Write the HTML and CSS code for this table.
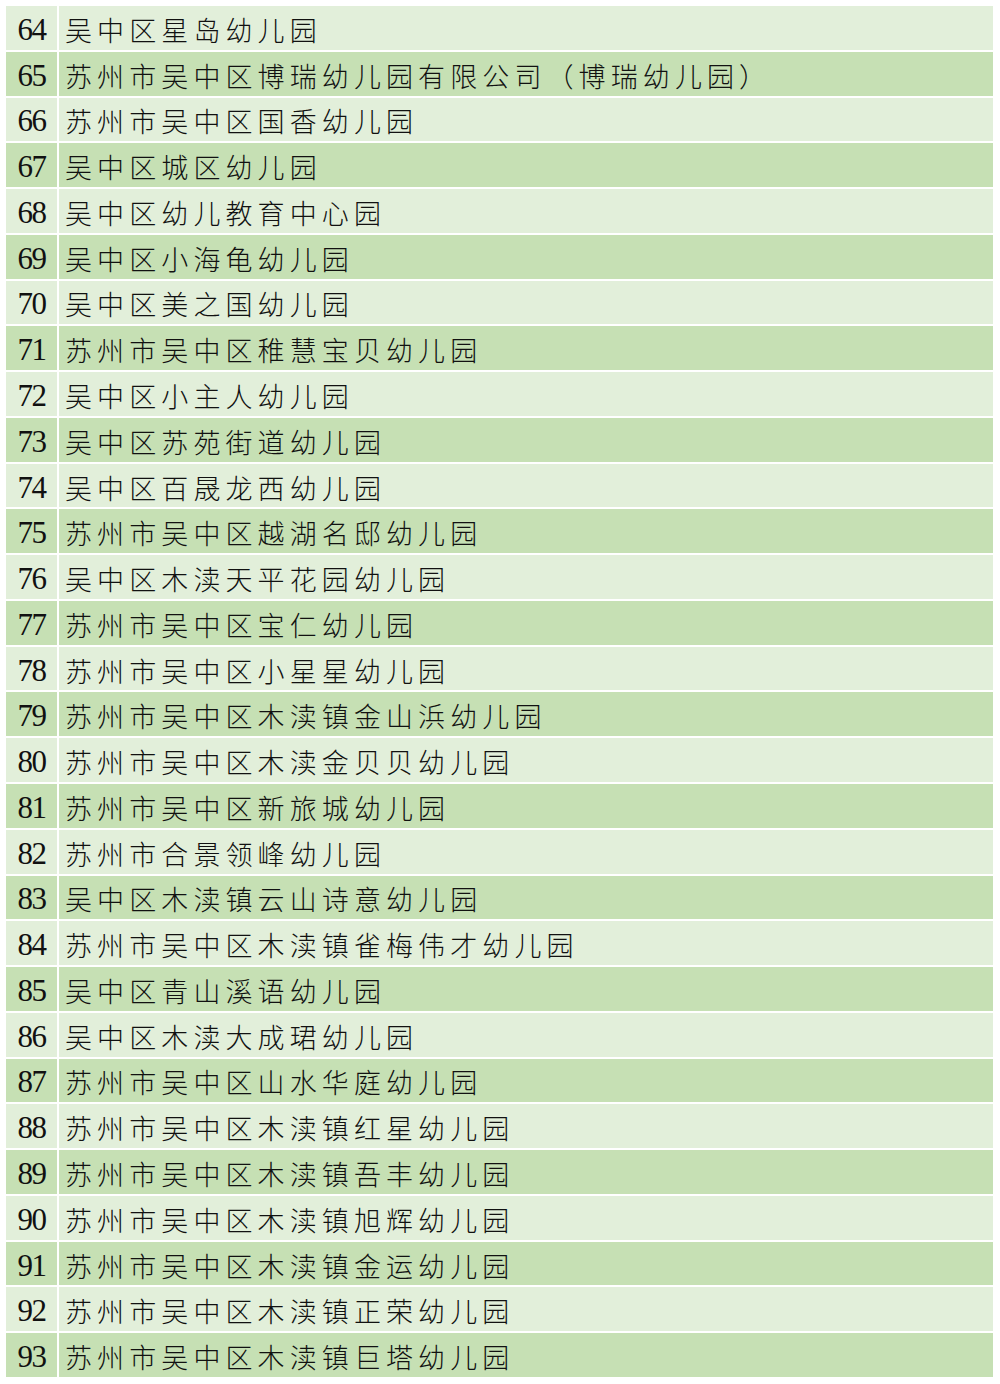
FILE: index.html
```html
<!DOCTYPE html>
<html lang="zh-CN">
<head>
<meta charset="utf-8">
<title>幼儿园名单</title>
<link rel="stylesheet" href="styles.css">
</head>
<body>
<div class="table">
  <div class="row light"><div class="num">64</div><div class="name">吴中区星岛幼儿园</div></div>
  <div class="row dark"><div class="num">65</div><div class="name">苏州市吴中区博瑞幼儿园有限公司（博瑞幼儿园）</div></div>
  <div class="row light"><div class="num">66</div><div class="name">苏州市吴中区国香幼儿园</div></div>
  <div class="row dark"><div class="num">67</div><div class="name">吴中区城区幼儿园</div></div>
  <div class="row light"><div class="num">68</div><div class="name">吴中区幼儿教育中心园</div></div>
  <div class="row dark"><div class="num">69</div><div class="name">吴中区小海龟幼儿园</div></div>
  <div class="row light"><div class="num">70</div><div class="name">吴中区美之国幼儿园</div></div>
  <div class="row dark"><div class="num">71</div><div class="name">苏州市吴中区稚慧宝贝幼儿园</div></div>
  <div class="row light"><div class="num">72</div><div class="name">吴中区小主人幼儿园</div></div>
  <div class="row dark"><div class="num">73</div><div class="name">吴中区苏苑街道幼儿园</div></div>
  <div class="row light"><div class="num">74</div><div class="name">吴中区百晟龙西幼儿园</div></div>
  <div class="row dark"><div class="num">75</div><div class="name">苏州市吴中区越湖名邸幼儿园</div></div>
  <div class="row light"><div class="num">76</div><div class="name">吴中区木渎天平花园幼儿园</div></div>
  <div class="row dark"><div class="num">77</div><div class="name">苏州市吴中区宝仁幼儿园</div></div>
  <div class="row light"><div class="num">78</div><div class="name">苏州市吴中区小星星幼儿园</div></div>
  <div class="row dark"><div class="num">79</div><div class="name">苏州市吴中区木渎镇金山浜幼儿园</div></div>
  <div class="row light"><div class="num">80</div><div class="name">苏州市吴中区木渎金贝贝幼儿园</div></div>
  <div class="row dark"><div class="num">81</div><div class="name">苏州市吴中区新旅城幼儿园</div></div>
  <div class="row light"><div class="num">82</div><div class="name">苏州市合景领峰幼儿园</div></div>
  <div class="row dark"><div class="num">83</div><div class="name">吴中区木渎镇云山诗意幼儿园</div></div>
  <div class="row light"><div class="num">84</div><div class="name">苏州市吴中区木渎镇雀梅伟才幼儿园</div></div>
  <div class="row dark"><div class="num">85</div><div class="name">吴中区青山溪语幼儿园</div></div>
  <div class="row light"><div class="num">86</div><div class="name">吴中区木渎大成珺幼儿园</div></div>
  <div class="row dark"><div class="num">87</div><div class="name">苏州市吴中区山水华庭幼儿园</div></div>
  <div class="row light"><div class="num">88</div><div class="name">苏州市吴中区木渎镇红星幼儿园</div></div>
  <div class="row dark"><div class="num">89</div><div class="name">苏州市吴中区木渎镇吾丰幼儿园</div></div>
  <div class="row light"><div class="num">90</div><div class="name">苏州市吴中区木渎镇旭辉幼儿园</div></div>
  <div class="row dark"><div class="num">91</div><div class="name">苏州市吴中区木渎镇金运幼儿园</div></div>
  <div class="row light"><div class="num">92</div><div class="name">苏州市吴中区木渎镇正荣幼儿园</div></div>
  <div class="row dark"><div class="num">93</div><div class="name">苏州市吴中区木渎镇巨塔幼儿园</div></div>
</div>
</body>
</html>
```
FILE: styles.css
```css
html, body {
  margin: 0;
  padding: 0;
  background: #ffffff;
}

body {
  padding: 6px 7px 0 6px;
  color: #111111;
}

.table {
  width: 987px;
  display: flex;
  flex-direction: column;
  gap: 2px;
}

.row {
  display: grid;
  grid-template-columns: 51px 1fr;
  column-gap: 2px;
  height: 43.77px;
  background: #ffffff;
}

.row > div {
  display: flex;
  align-items: center;
  padding-top: 3px;
  box-sizing: border-box;
}

.light > div {
  background: #e2efda;
}

.dark > div {
  background: #c6e0b4;
}

.num {
  justify-content: center;
  font-family: "Liberation Serif", "Times New Roman", serif;
  font-size: 31px;
  letter-spacing: -1.5px;
  line-height: 1;
}

.name {
  padding-left: 6px;
  font-family: "Noto Sans CJK SC", "Noto Sans", sans-serif;
  font-size: 27px;
  font-weight: 300;
  letter-spacing: 5.1px;
  line-height: 1;
  white-space: nowrap;
}
```
